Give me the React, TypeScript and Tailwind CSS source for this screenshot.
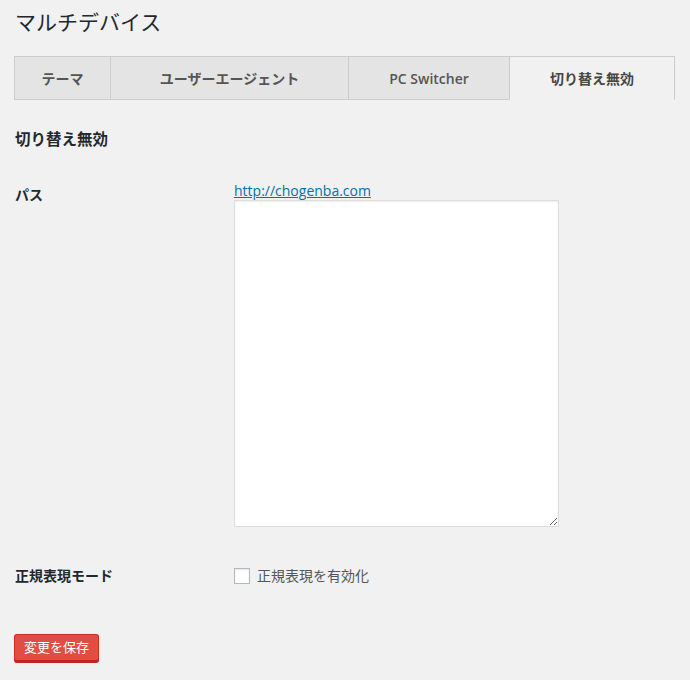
import { useState } from 'react';

const tabs = [
  { label: 'テーマ', width: 'w-[96px]' },
  { label: 'ユーザーエージェント', width: 'w-[238px]' },
  { label: 'PC Switcher', width: 'w-[161px]' },
  { label: '切り替え無効', width: 'w-[166px]' },
];

export default function App() {
  const [active, setActive] = useState(3);
  const [paths, setPaths] = useState('');
  const [regex, setRegex] = useState(false);

  return (
    <div className="min-h-[680px] bg-[#f1f1f1] text-[#444] font-['Open_Sans','Noto_Sans_CJK_JP',sans-serif] text-[13px]">
      <div className="pl-[14px] pr-[15px] pt-[8px]">
        <h1 className="pl-[1px] text-[21px] leading-[29px] text-[#23282d]">マルチデバイス</h1>

        <nav className="mt-[19px] flex">
          {tabs.map((tab, i) => {
            const isActive = i === active;
            return (
              <button
                key={tab.label}
                onClick={() => setActive(i)}
                className={
                  (isActive
                    ? 'bg-[#f1f1f1] text-[#464646] border-r border-b border-b-transparent'
                    : 'bg-[#e4e4e4] text-[#555] border-b border-b-[#ccc]') +
                  ' ' +
                  tab.width +
                  ' h-[44px] border-t border-l border-[#ccc] text-[14px] font-semibold flex items-center justify-center'
                }
              >
                {tab.label}
              </button>
            );
          })}
        </nav>

        <h2 className="mt-[28px] pl-[1px] text-[15.5px] font-semibold text-[#23282d]">切り替え無効</h2>

        <div className="mt-[31px] flex">
          <div className="w-[220px] pl-[1px] pt-[2px] text-[14px] font-semibold text-[#23282d]">パス</div>
          <div className="flex flex-col">
            <a href="#" className="text-[14px] leading-[18px] text-[#0073aa] underline">
              http://chogenba.com
            </a>
            <textarea
              value={paths}
              onChange={(e) => setPaths(e.target.value)}
              className="w-[325px] h-[327px] bg-white border border-[#ddd] shadow-[inset_0_1px_2px_rgba(0,0,0,0.07)] outline-none p-[4px]"
            />
          </div>
        </div>

        <div className="mt-[38px] flex items-center">
          <div className="w-[220px] pl-[1px] text-[14px] font-semibold text-[#23282d]">正規表現モード</div>
          <label className="flex items-center gap-[7px] text-[14px] text-[#555]">
            <input
              type="checkbox"
              checked={regex}
              onChange={(e) => setRegex(e.target.checked)}
              className="appearance-none w-[16px] h-[16px] bg-white border border-[#b4b9be] shadow-[inset_0_1px_2px_rgba(0,0,0,0.1)] checked:bg-[#0073aa]"
            />
            正規表現を有効化
          </label>
        </div>

        <button className="mt-[48px] h-[28px] w-[85px] rounded-[3px] bg-[#e14d43] border border-[#d02c21] border-b-[#ba281e] border-b-2 text-white text-[13px] shadow-[0_1px_0_#ba281e]">
          変更を保存
        </button>
      </div>
    </div>
  );
}
